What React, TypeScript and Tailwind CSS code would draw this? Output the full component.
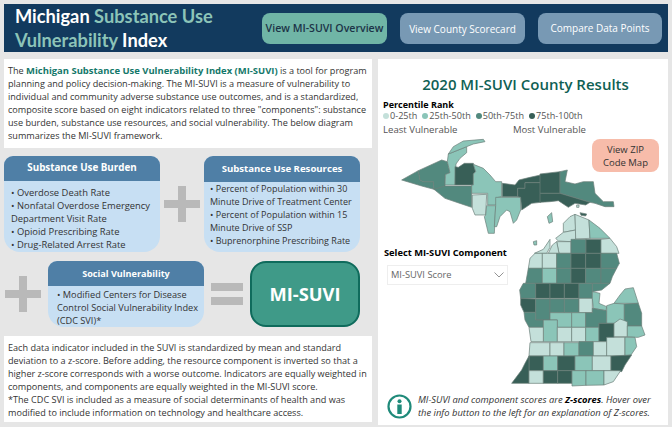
import React from "react";

const V = "#c4e0da", L = "#8bc5b8", M = "#52897e", D = "#385f57";
type P = [string, string];
const z7: P[] = [
  [M, "20,150 70,122 75,150 85,155 115,155 117,178 80,168"],
  [M, "70,122 140,90 157,95 165,128 150,135 150,178 117,178 115,155 85,155 75,150"],
  [M, "117,178 150,168 230,168 230,232 200,222 150,205"],
  [L, "157,95 160,72 215,50 215,68 195,85 183,102 180,165 150,165 152,133 165,128"],
  [L, "160,72 175,50 205,33 265,28 270,35 235,42 215,50"],
  [D, "180,110 190,112 208,100 235,100 242,125 235,132 235,165 180,165"],
  [L, "235,103 265,115 285,135 302,155 320,155 320,200 305,203 305,225 278,225 278,190 230,190 230,165 235,165 235,132 242,125"],
];
const z3: P[] = [
  [V, "292,405 335,403 332,465 300,465 292,445"],
  [L, "335,437 362,437 358,520 340,520 328,470 332,465"],
  [L, "362,412 437,412 437,450 425,480 415,490 405,455 395,450 375,470 365,500 358,500 362,437"],
  [D, "382,370 420,375 432,360 465,352 497,345 497,368 450,368 450,385 428,385 428,410 382,410"],
  [D, "428,385 450,385 450,368 497,368 497,427 470,430 440,450 437,412 428,410"],
];
const z8: P[] = [
  [D, "75,12 135,5 135,70 75,70"],
  [M, "135,5 157,0 150,35 180,42 205,35 235,35 240,70 265,95 295,95 297,110 270,110 240,100 225,97 135,70"],
  [D, "75,70 135,70 225,97 212,105 180,100 160,112 130,92 105,95 75,97"],
  [V, "145,160 165,140 180,133 182,180 145,187"],
  [V, "122,205 145,187 182,180 182,207 168,215 130,213"],
  [V, "180,133 222,150 225,205 182,207"],
  [L, "222,150 255,175 285,205 225,205"],
  [V, "125,215 168,215 168,250 132,250"],
  [M, "168,208 213,208 213,250 168,250"],
  [D, "213,208 258,208 258,250 213,250"],
  [V, "258,208 285,205 305,230 312,250 258,250"],
  [V, "58,250 85,238 105,208 105,232 95,250"],
  [V, "100,250 112,225 125,215 132,250"],
  [L, "97,140 110,128 113,155 102,160"],
  [D, "195,128 215,132 212,138 198,136"],
  [L, "55,215 65,212 65,225 57,225"],
  [V, "185,105 192,105 192,112 185,112"],
];
const rect = (c: string, x1: number, y1: number, x2: number, y2: number): P => [c, `${x1},${y1} ${x2},${y1} ${x2},${y2} ${x1},${y2}`];
const z4: P[] = [
  [V, "465,55 480,40 502,40 502,85 460,85"],
  rect(V, 502, 40, 545, 85), rect(M, 545, 40, 588, 85), rect(D, 588, 40, 632, 85), rect(D, 632, 40, 678, 85),
  [M, "678,40 725,40 733,70 725,85 678,85"],
  [M, "460,85 502,85 502,130 452,130"],
  rect(L, 502, 85, 545, 130), rect(M, 545, 85, 588, 130), rect(D, 588, 85, 632, 130), rect(M, 632, 85, 678, 130),
  [M, "678,85 725,85 712,110 705,130 678,130"],
  [M, "445,130 482,130 482,175 437,175 434,150"],
  rect(D, 482, 130, 525, 175), rect(D, 525, 130, 568, 175), rect(D, 568, 130, 612, 175), rect(M, 612, 130, 652, 175),
  [M, "652,130 705,130 680,150 652,155"],
  [D, "437,175 482,177 482,217 447,217 437,195"],
  rect(M, 482, 177, 525, 240), rect(M, 525, 177, 568, 218), rect(M, 568, 177, 612, 218), rect(V, 612, 175, 652, 218),
  [L, "652,155 675,160 672,190 695,200 693,212 655,205 652,175"],
  [M, "447,217 482,217 482,240 505,240 505,262 462,262 450,240"],
  [L, "525,218 590,218 590,262 547,262 547,240 525,240"],
  rect(L, 590, 218, 632, 262),
  [M, "652,205 695,212 695,250 672,250 672,262 632,262 632,218 652,218"],
  [L, "717,190 735,165 750,147 775,143 790,190"],
  [L, "695,197 717,190 748,192 748,245 717,250 695,250"],
  [M, "748,192 790,190 800,220 800,258 757,258 748,245"],
  rect(L, 505, 240, 547, 305),
  [V, "462,262 505,262 505,305 468,305"],
  rect(V, 547, 262, 590, 305), rect(V, 590, 262, 632, 305), rect(L, 632, 262, 672, 305), 
  [D, "672,250 717,250 717,305 672,305"],
  [V, "717,250 735,237 757,245 757,290 717,290"],
  [L, "757,258 800,258 810,285 790,292 782,292 757,290"],
  [V, "465,308 525,308 525,348 462,348"],
  rect(V, 525, 308, 567, 348), rect(L, 567, 308, 612, 348), rect(M, 612, 305, 655, 348), rect(V, 655, 305, 695, 348), 
  [V, "695,292 750,292 750,348 695,348"],
  [L, "750,292 780,292 785,320 768,345 750,348"],
  rect(D, 462, 348, 505, 392), rect(L, 505, 348, 548, 392), rect(D, 548, 348, 600, 392), rect(L, 600, 348, 652, 392), rect(V, 652, 348, 708, 392),
  [D, "708,348 770,345 750,375 740,395 708,392"],
  [D, "462,348 462,430 410,430 440,390 450,370"],
  rect(V, 462, 392, 505, 430), rect(D, 505, 392, 548, 430), rect(D, 548, 392, 591, 430),
  [L, "591,392 633,392 633,436 591,438"],
  [L, "633,392 687,392 687,435 633,436"],
  [V, "687,392 737,392 715,425 687,435"],
];

function Group({ items, tx, ty }: { items: P[]; tx: number; ty: number }) {
  return (
    <g transform={`translate(${tx} ${ty}) scale(0.33333)`}>
      {items.map(([c, p], i) => (
        <polygon key={i} points={p} fill={c} stroke="#6b7f7a" strokeWidth={0.7} strokeLinejoin="round" vectorEffect="non-scaling-stroke" />
      ))}
    </g>
  );
}

function Plus() {
  return (
    <div className="relative h-[36px] w-[36px] shrink-0">
      <div className="absolute left-0 top-[14px] h-[8px] w-[36px] bg-[#b9b9b9]" />
      <div className="absolute left-[14px] top-0 h-[36px] w-[8px] bg-[#b9b9b9]" />
    </div>
  );
}

function Card({ title, h, headH, children, cls }: { title: string; h: string; headH: string; children: React.ReactNode; cls: string }) {
  return (
    <div className={`flex w-[156px] shrink-0 flex-col overflow-hidden rounded-t-[9px] rounded-b-[16px] bg-[#c7dff3] ${h}`}>
      <div className={`flex shrink-0 items-center justify-center bg-[#4f7fa6] font-bold text-white ${headH}`}>{title}</div>
      <div className={`leading-[13px] whitespace-nowrap text-[#333] ${cls}`}>{children}</div>
    </div>
  );
}

export default function App() {
  return (
    <div className="flex h-[427px] w-[672px] flex-col overflow-hidden bg-[#e6e6e6] px-[4px] pt-[4px] font-['Open_Sans',sans-serif]">
      <header className="flex h-[48px] shrink-0 items-center bg-[#123a5e] pl-[11px]">
        <h1 className="-mt-[1px] w-[247px] font-['Lato',sans-serif] text-[18.25px] leading-[24px] font-bold whitespace-nowrap text-white">
          Michigan <span className="text-[#8cc4b8]">Substance Use</span>
          <br />
          <span className="text-[#8cc4b8]">Vulnerability</span> Index
        </h1>
        <div className="flex h-[31px] w-[125px] items-center justify-center rounded-[8px] bg-[#70b5a6] pt-[2px] text-[10.6px] font-semibold whitespace-nowrap text-[#1c3347]">View MI-SUVI Overview</div>
        <div className="ml-[13px] flex h-[31px] w-[125px] items-center justify-center rounded-[8px] bg-[#7899b4] pt-[2px] text-[10px] whitespace-nowrap text-white">View County Scorecard</div>
        <div className="ml-[13px] flex h-[31px] w-[124px] items-center justify-center rounded-[8px] bg-[#7899b4] pt-[1px] text-[10px] whitespace-nowrap text-white">Compare Data Points</div>
      </header>

      <div className="mt-[7px] flex gap-[6px]">
        <div className="flex w-[368px] shrink-0 flex-col">
          <div className="h-[89px] bg-white px-[4px] pt-[5px] text-[9.1px] leading-[13px] whitespace-nowrap text-[#333]">
            The <b className="text-[9.45px] font-bold text-[#14786a]">Michigan Substance Use Vulnerability Index (MI-SUVI)</b> is a tool for program
            <br />
            planning and policy decision-making. The MI-SUVI is a measure of vulnerability to
            <br />
            individual and community adverse substance use outcomes, and is a standardized,
            <br />
            composite score based on eight indicators related to three "components": substance
            <br />
            use burden, substance use resources, and social vulnerability. The below diagram
            <br />
            summarizes the MI-SUVI framework.
          </div>

          <div className="mt-[8px] flex h-[96px] items-center">
            <Card title="Substance Use Burden" h="h-[96px]" headH="h-[25px] text-[9.8px]" cls="pl-[7px] pt-[5px] text-[9.4px]">
              • Overdose Death Rate
              <br />• Nonfatal Overdose Emergency
              <br />Department Visit Rate
              <br />• Opioid Prescribing Rate
              <br />• Drug-Related Arrest Rate
            </Card>
            <div className="ml-[4px]"><Plus /></div>
            <div className="ml-[4px]">
              <Card title="Substance Use Resources" h="h-[96px]" headH="h-[26px] text-[9.6px]" cls="pl-[6px] pt-[0px] text-[9px]">
                • Percent of Population within 30
                <br />Minute Drive of Treatment Center
                <br />• Percent of Population within 15
                <br />Minute Drive of SSP
                <br />• Buprenorphine Prescribing Rate
              </Card>
            </div>
          </div>

          <div className="mt-[9px] flex h-[66px] items-center">
            <div className="ml-[1px]"><Plus /></div>
            <div className="ml-[7px]">
              <Card title="Social Vulnerability" h="h-[66px]" headH="h-[25px] text-[9.1px]" cls="pl-[9px] pt-[2px] text-[9.2px]">
                • Modified Centers for Disease
                <br />Control Social Vulnerability Index
                <br />(CDC SVI)*
              </Card>
            </div>
            <div className="ml-[7px] flex w-[32px] flex-col gap-[6px]">
              <div className="h-[8px] bg-[#b9b9b9]" />
              <div className="h-[8px] bg-[#b9b9b9]" />
            </div>
            <div className="ml-[7px] flex h-[66px] w-[110px] items-center justify-center rounded-[16px] border-2 border-[#0f6b5c] bg-[#3f9a88] text-[18.3px] font-bold text-white">MI-SUVI</div>
          </div>

          <div className="mt-[9px] h-[86px] bg-white px-[4px] pt-[5px] text-[9.1px] leading-[13px] whitespace-nowrap text-[#333]">
            Each data indicator included in the SUVI is standardized by mean and standard
            <br />
            deviation to a z-score. Before adding, the resource component is inverted so that a
            <br />
            higher z-score corresponds with a worse outcome. Indicators are equally weighted in
            <br />
            components, and components are equally weighted in the MI-SUVI score.
            <br />
            *The CDC SVI is included as a measure of social determinants of health and was
            <br />
            modified to include information on technology and healthcare access.
          </div>
        </div>

        <div className="relative flex h-[366px] w-[290px] shrink-0 flex-col bg-white pl-[5px]">
          <svg className="absolute left-0 top-0 h-[366px] w-[290px]" viewBox="378 59 290 366">
            <Group items={z7} tx={395} ty={130} />
            <Group items={z3} tx={375} ty={60} />
            <Group items={z8} tx={515} ty={170} />
            <Group items={z4} tx={375} ty={240} />
          </svg>
          <div className="relative mt-[14px] w-[285px] text-center text-[15px] leading-[22px] font-semibold whitespace-nowrap text-[#0f5f54]">2020 MI-SUVI County Results</div>
          <div className="relative mt-[4px] text-[9px] leading-[11px] font-bold text-black">Percentile Rank</div>
          <div className="relative mt-[1px] flex items-center text-[9.1px] leading-[9px] whitespace-nowrap text-[#555]">
            <span className="mr-[1px] h-[6px] w-[6px] rounded-full bg-[#c4e0da]" />0-25th
            <span className="ml-[5px] mr-[1px] h-[6px] w-[6px] rounded-full bg-[#8bc5b8]" />25th-50th
            <span className="ml-[5px] mr-[1px] h-[6px] w-[6px] rounded-full bg-[#52897e]" />50th-75th
            <span className="ml-[5px] mr-[1px] h-[6px] w-[6px] rounded-full bg-[#385f57]" />75th-100th
          </div>
          <div className="relative mt-[3px] flex w-[203px] justify-between text-[9.6px] leading-[13px] whitespace-nowrap text-[#555]">
            <span>Least Vulnerable</span>
            <span>Most Vulnerable</span>
          </div>
          <div className="absolute left-[214px] top-[80px] flex h-[33px] w-[67px] items-center justify-center rounded-[8px] bg-[#f7bcaa] text-center text-[9.5px] leading-[13px] text-[#333]">
            View ZIP
            <br />
            Code Map
          </div>
          <div className="absolute left-[6px] top-[187px] text-[9.3px] leading-[13px] font-bold whitespace-nowrap text-black">Select MI-SUVI Component</div>
          <div className="absolute left-[9px] top-[206px] flex h-[20px] w-[121px] items-center justify-between border border-[#eeeeee] bg-white pl-[3px] pr-[3px] text-[9.3px] text-[#666]">
            MI-SUVI Score
            <svg width="10" height="6" viewBox="0 0 10 6" fill="none" stroke="#777" strokeWidth="0.8">
              <path d="M0.5 0.5 5 5 9.5 0.5" />
            </svg>
          </div>
          <div className="absolute left-[9px] top-[334px] flex items-center gap-[6px]">
            <svg width="25" height="25" viewBox="0 0 25 25">
              <circle cx="12.5" cy="12.5" r="11" fill="white" stroke="#1f8a7a" strokeWidth="2.2" />
              <circle cx="12.5" cy="7.2" r="2" fill="#1f8a7a" />
              <rect x="10.3" y="10.5" width="4.4" height="9.5" fill="#1f8a7a" />
            </svg>
            <div className="text-[9.4px] leading-[13px] whitespace-nowrap text-[#333] italic">
              MI-SUVI and component scores are <b className="font-bold text-black">Z-scores</b>. Hover over
              <br />
              the info button to the left for an explanation of Z-scores.
            </div>
          </div>
        </div>
      </div>
    </div>
  );
}
